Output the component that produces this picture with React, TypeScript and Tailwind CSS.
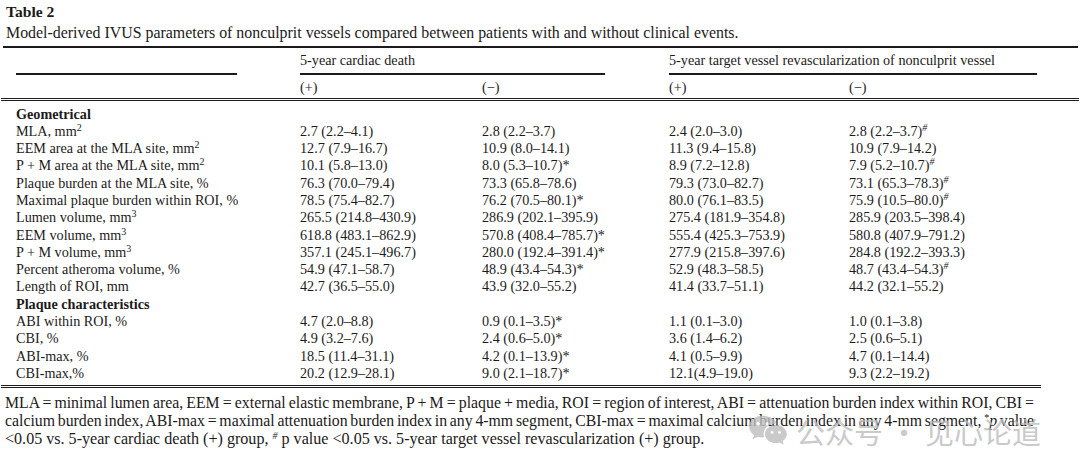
import React from "react";

type Row = { label: React.ReactNode; v?: string[]; bold?: boolean };

const sq = <sup className="text-[10px]">2</sup>;
const cu = <sup className="text-[10px]">3</sup>;

const rows: Row[] = [
  { label: "Geometrical", bold: true },
  { label: <>MLA, mm{sq}</>, v: ["2.7 (2.2–4.1)", "2.8 (2.2–3.7)", "2.4 (2.0–3.0)", "2.8 (2.2–3.7)#"] },
  { label: <>EEM area at the MLA site, mm{sq}</>, v: ["12.7 (7.9–16.7)", "10.9 (8.0–14.1)", "11.3 (9.4–15.8)", "10.9 (7.9–14.2)"] },
  { label: <>P + M area at the MLA site, mm{sq}</>, v: ["10.1 (5.8–13.0)", "8.0 (5.3–10.7)*", "8.9 (7.2–12.8)", "7.9 (5.2–10.7)#"] },
  { label: "Plaque burden at the MLA site, %", v: ["76.3 (70.0–79.4)", "73.3 (65.8–78.6)", "79.3 (73.0–82.7)", "73.1 (65.3–78.3)#"] },
  { label: "Maximal plaque burden within ROI, %", v: ["78.5 (75.4–82.7)", "76.2 (70.5–80.1)*", "80.0 (76.1–83.5)", "75.9 (10.5–80.0)#"] },
  { label: <>Lumen volume, mm{cu}</>, v: ["265.5 (214.8–430.9)", "286.9 (202.1–395.9)", "275.4 (181.9–354.8)", "285.9 (203.5–398.4)"] },
  { label: <>EEM volume, mm{cu}</>, v: ["618.8 (483.1–862.9)", "570.8 (408.4–785.7)*", "555.4 (425.3–753.9)", "580.8 (407.9–791.2)"] },
  { label: <>P + M volume, mm{cu}</>, v: ["357.1 (245.1–496.7)", "280.0 (192.4–391.4)*", "277.9 (215.8–397.6)", "284.8 (192.2–393.3)"] },
  { label: "Percent atheroma volume, %", v: ["54.9 (47.1–58.7)", "48.9 (43.4–54.3)*", "52.9 (48.3–58.5)", "48.7 (43.4–54.3)#"] },
  { label: "Length of ROI, mm", v: ["42.7 (36.5–55.0)", "43.9 (32.0–55.2)", "41.4 (33.7–51.1)", "44.2 (32.1–55.2)"] },
  { label: "Plaque characteristics", bold: true },
  { label: "ABI within ROI, %", v: ["4.7 (2.0–8.8)", "0.9 (0.1–3.5)*", "1.1 (0.1–3.0)", "1.0 (0.1–3.8)"] },
  { label: "CBI, %", v: ["4.9 (3.2–7.6)", "2.4 (0.6–5.0)*", "3.6 (1.4–6.2)", "2.5 (0.6–5.1)"] },
  { label: "ABI-max, %", v: ["18.5 (11.4–31.1)", "4.2 (0.1–13.9)*", "4.1 (0.5–9.9)", "4.7 (0.1–14.4)"] },
  { label: "CBI-max,%", v: ["20.2 (12.9–28.1)", "9.0 (2.1–18.7)*", "12.1(4.9–19.0)", "9.3 (2.2–19.2)"] },
];

function Val({ s }: { s: string }) {
  if (s.endsWith("#")) {
    return (
      <>
        {s.slice(0, -1)}
        <sup className="text-[10px] italic">#</sup>
      </>
    );
  }
  return <>{s}</>;
}

function WeChat() {
  return (
    <svg width="40" height="33" viewBox="0 0 34 28" className="block">
      <path
        d="M12.5 1.5C6 1.5 1 5.6 1 10.7c0 2.9 1.6 5.4 4.1 7.1L4 21.5l4.2-2.2c1.3.4 2.8.6 4.3.6.4 0 .8 0 1.2-.1-.3-.9-.4-1.8-.4-2.7 0-5 4.7-9 10.5-9h.5C23.3 4.6 18.4 1.5 12.5 1.5z"
        fill="#bdbdbd"
      />
      <path
        d="M33 17c0-4.3-4.2-7.7-9.3-7.7s-9.3 3.4-9.3 7.7 4.2 7.7 9.3 7.7c1.1 0 2.2-.2 3.2-.5l3.4 1.9-.9-3.1C31.6 21.6 33 19.4 33 17z"
        fill="#bdbdbd"
      />
      <circle cx="8.6" cy="8.2" r="1.5" fill="#fff" />
      <circle cx="16.2" cy="8.2" r="1.5" fill="#fff" />
      <circle cx="20.5" cy="15.6" r="1.2" fill="#fff" />
      <circle cx="26.8" cy="15.6" r="1.2" fill="#fff" />
    </svg>
  );
}

export default function App() {
  return (
    <div
      className="relative w-[1080px] h-[473px] overflow-hidden bg-white text-[#1c1a1a]"
      style={{ fontFamily: '"Liberation Serif", "Times New Roman", serif' }}
    >
      <div className="pt-[3px] pl-[6px] text-[15.6px] leading-[18px] font-bold">Table 2</div>
      <div className="mt-[3px] pl-[6px] text-[15.9px] leading-[18px] whitespace-nowrap">
        Model-derived IVUS parameters of nonculprit vessels compared between patients with and without clinical events.
      </div>
      <div className="mt-[4px] ml-[3px] w-[1075px] h-[2px] bg-[#1c1a1a]" />

      {/* header row 1 */}
      <div className="mt-[3px] flex text-[14.2px] leading-[18px]">
        <div className="w-[300px] pl-[16px]">
          <div className="h-[18px]" />
          <div className="mt-[4px] w-[221px] h-[1.5px] bg-[#1c1a1a]" />
        </div>
        <div className="w-[369px]">
          <div>5-year cardiac death</div>
          <div className="mt-[4px] w-[305px] h-[1.5px] bg-[#1c1a1a]" />
        </div>
        <div className="flex-1">
          <div>5-year target vessel revascularization of nonculprit vessel</div>
          <div className="mt-[4px] w-[368px] h-[1.5px] bg-[#1c1a1a]" />
        </div>
      </div>

      {/* header row 2 */}
      <div className="mt-[3px] flex text-[14.2px] leading-[18px]">
        <div className="w-[300px]" />
        <div className="w-[182px]">(+)</div>
        <div className="w-[187px]">(−)</div>
        <div className="w-[180px]">(+)</div>
        <div className="flex-1">(−)</div>
      </div>
      <div className="mt-[2px] ml-[1px] w-[1078px] h-[3px] border-y border-[#1c1a1a]" />

      {/* body */}
      <div className="mt-[5px] text-[14.2px] leading-[17.3px]">
        {rows.map((r, i) => (
          <div key={i} className="flex whitespace-nowrap">
            <div className={`w-[300px] pl-[16px] ${r.bold ? "font-bold" : ""}`}>{r.label}</div>
            {r.v ? (
              <>
                <div className="w-[182px]">
                  <Val s={r.v[0]} />
                </div>
                <div className="w-[187px]">
                  <Val s={r.v[1]} />
                </div>
                <div className="w-[180px]">
                  <Val s={r.v[2]} />
                </div>
                <div className="flex-1">
                  <Val s={r.v[3]} />
                </div>
              </>
            ) : null}
          </div>
        ))}
      </div>
      <div className="mt-[3px] ml-[1px] w-[1040px] h-[3px] border-y border-[#1c1a1a]" />

      {/* footnote */}
      <div className="mt-[6px] ml-[5px] w-[1029px] text-[15.8px] leading-[18px]">
        <div className="text-justify [text-align-last:justify] [word-spacing:-2.5px]">
          MLA = minimal lumen area, EEM = external elastic membrane, P + M = plaque + media, ROI = region of interest, ABI = attenuation burden index within ROI, CBI =
        </div>
        <div className="text-justify [text-align-last:justify] [word-spacing:-2.5px]">
          calcium burden index, ABI-max = maximal attenuation burden index in any 4-mm segment, CBI-max = maximal calcium burden index in any 4-mm segment,{" "}
          <sup className="text-[10px]">*</sup>
          <i>p</i> value
        </div>
        <div className="whitespace-nowrap text-[16.1px]">
          &lt;0.05 vs. 5-year cardiac death (+) group, <sup className="text-[10px] italic">#</sup> p value &lt;0.05 vs. 5-year target vessel revascularization (+) group.
        </div>
      </div>

      {/* watermark */}
      <div className="absolute left-[748px] top-[414px] flex items-center gap-[8px] opacity-80">
        <WeChat />
        <div
          className="text-[29px] leading-[32px] text-[#bdbdbd] whitespace-nowrap"
          style={{ fontFamily: '"Noto Sans CJK SC", "Noto Sans", sans-serif' }}
        >
          公众号 · 见心论道
        </div>
      </div>
    </div>
  );
}
